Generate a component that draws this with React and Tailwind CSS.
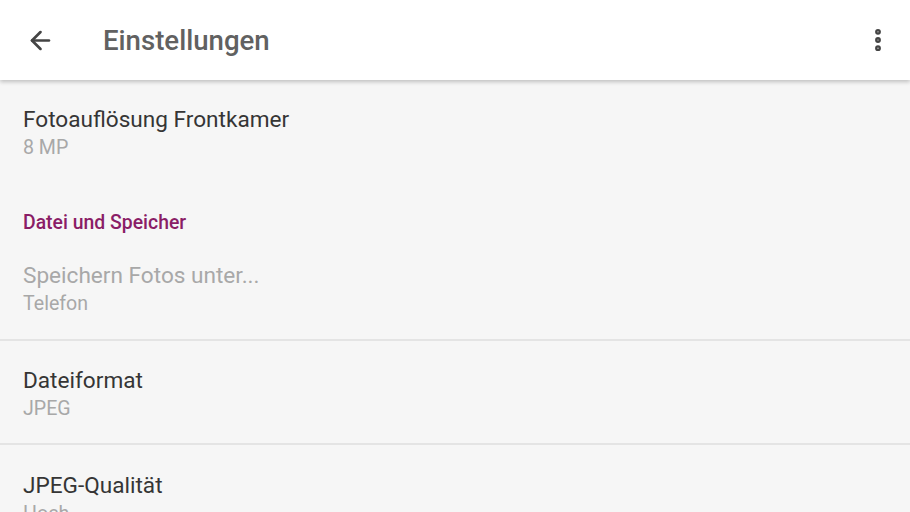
import { ArrowLeft, EllipsisVertical } from 'lucide-react';

const Item = ({ title, summary, disabled, top = 'pt-[26px]', bottom = 'pb-[22px]' }) => (
    <div className={`px-[23px] ${top} ${bottom}`}>
        <div className={`text-[22.6px] leading-[28px] ${disabled ? 'text-[#a8a8a8]' : 'text-[#353535]'}`}>{title}</div>
        <div className="text-[19.6px] leading-[28px] text-[#a8a8a8]">{summary}</div>
    </div>
);

const Divider = () => <div className="h-[2px] bg-[#e4e4e4]" />;

export default function App() {
    return (
        <div className="min-h-screen h-[512px] overflow-hidden bg-[#f6f6f6]" style={{ fontFamily: 'Roboto, "Noto Sans", sans-serif' }}>
            {/* Toolbar */}
            <div className="relative z-10 h-[80px] bg-white flex items-center shadow-[0_2px_4px_rgba(0,0,0,0.22)]">
                <div className="w-[103px] pl-[26px] flex items-center">
                    <ArrowLeft size={29} strokeWidth={2.2} className="text-[#444]" />
                </div>
                <h1 className="flex-1 pt-[2px] text-[27.6px] font-medium text-[#616161]">Einstellungen</h1>
                <div className="pr-[18px]">
                    <EllipsisVertical size={28} strokeWidth={3} className="text-[#444]" />
                </div>
            </div>

            <Item title="Fotoauflösung Frontkamer" summary="8 MP" top="pt-[26px]" bottom="pb-[49px]" />

            <div className="px-[23px] text-[19.4px] leading-[24px] font-medium text-[#8a1d66]">Datei und Speicher</div>

            <Item title="Speichern Fotos unter..." summary="Telefon" disabled top="pt-[27px]" bottom="pb-[21px]" />
            <Divider />
            <Item title="Dateiformat" summary="JPEG" top="pt-[26px]" bottom="pb-[20px]" />
            <Divider />
            <Item title="JPEG-Qualität" summary="Hoch" top="pt-[27px]" />
        </div>
    );
}
